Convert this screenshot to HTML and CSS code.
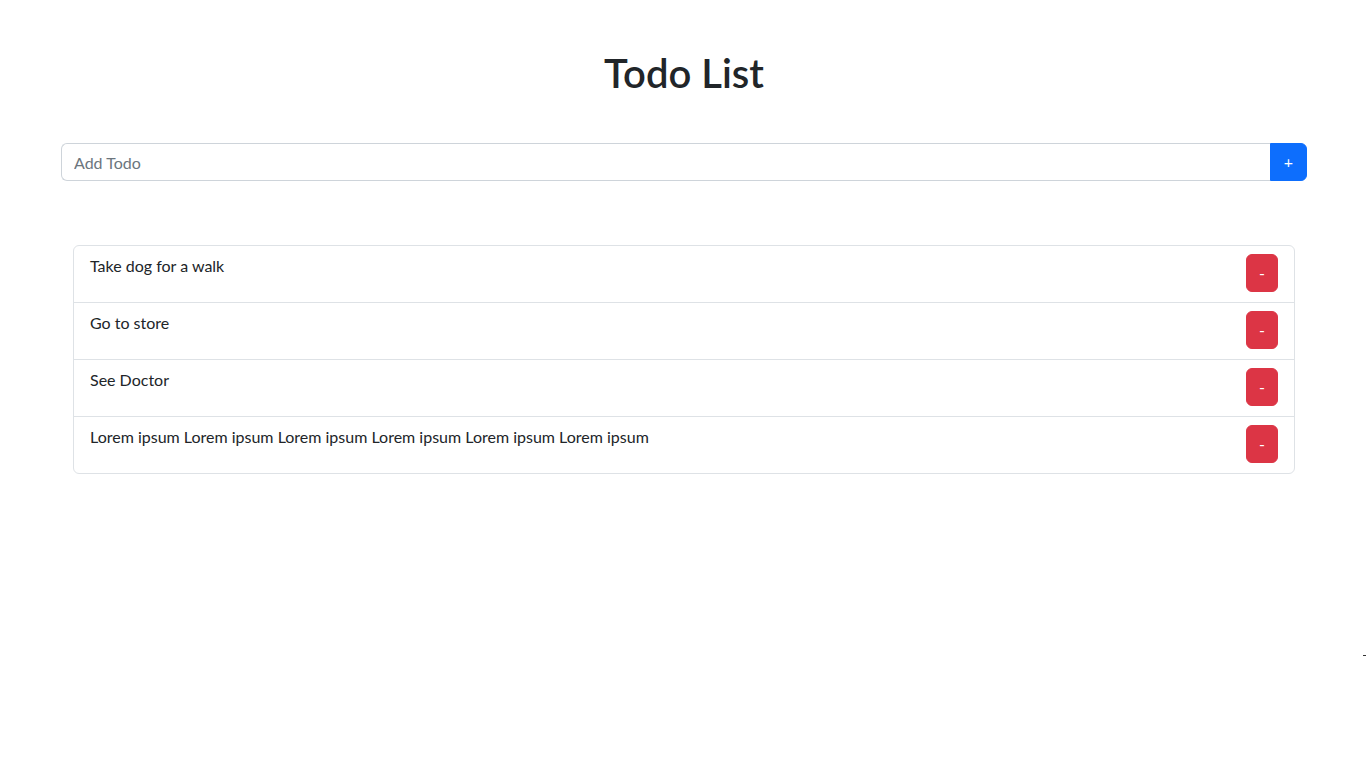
FILE: index.html
```html
<!DOCTYPE html>
<html lang="en">
<head>
<meta charset="utf-8">
<title>Todo List</title>
<link rel="stylesheet" href="styles.css">
</head>
<body>
<main class="page">
  <h1 class="title">Todo List</h1>
  <form class="add-form">
    <input class="add-input" type="text" placeholder="Add Todo">
    <button class="add-btn" type="button">+</button>
  </form>
  <ul class="todo-list">
    <li class="todo-item"><span class="todo-text">Take dog for a walk</span><button class="del-btn" type="button">-</button></li>
    <li class="todo-item"><span class="todo-text">Go to store</span><button class="del-btn" type="button">-</button></li>
    <li class="todo-item"><span class="todo-text">See Doctor</span><button class="del-btn" type="button">-</button></li>
    <li class="todo-item"><span class="todo-text">Lorem ipsum Lorem ipsum Lorem ipsum Lorem ipsum Lorem ipsum Lorem ipsum</span><button class="del-btn" type="button">-</button></li>
  </ul>
</main>
<span class="stray-mark"></span>
</body>
</html>
```
FILE: styles.css
```css
* { box-sizing: border-box; }
html, body { margin: 0; padding: 0; }
body {
  font-family: "Lato", "Liberation Sans", sans-serif;
  font-size: 16px;
  line-height: 1.5;
  color: #212529;
  background: #fff;
  position: relative;
  min-height: 768px;
}
.page {
  padding: 0 59px 0 61px;
}
.title {
  margin: 0;
  padding-top: 49px;
  font-size: 40px;
  font-weight: 600;
  line-height: 1.2;
  text-align: center;
}
.add-form {
  display: flex;
  margin-top: 46px;
  height: 38px;
}
.add-input {
  flex: 1;
  min-width: 0;
  height: 38px;
  padding: 6px 12px;
  font: inherit;
  color: #212529;
  border: 1px solid #ced4da;
  border-right: none;
  border-radius: 6px 0 0 6px;
  outline: none;
}
.add-input::placeholder { color: #6c757d; }
.add-btn {
  width: 37px;
  height: 38px;
  padding: 0;
  font: inherit;
  font-size: 16px;
  color: #fff;
  background: #0d6efd;
  border: 1px solid #0d6efd;
  border-radius: 0 6px 6px 0;
}
.todo-list {
  list-style: none;
  margin: 64px 12px 0 12px;
  padding: 0;
  border: 1px solid #dee2e6;
  border-radius: 6px;
}
.todo-item {
  display: flex;
  justify-content: space-between;
  align-items: flex-start;
  padding: 8px 16px 10px 16px;
  border-top: 1px solid #dee2e6;
}
.todo-item:first-child { border-top: none; }
.del-btn {
  width: 32px;
  height: 38px;
  padding: 0;
  font: inherit;
  color: #fff;
  background: #dc3545;
  border: 1px solid #dc3545;
  border-radius: 6px;
}
.stray-mark {
  position: absolute;
  left: 1363px;
  top: 655px;
  width: 3px;
  height: 1px;
  background: #333;
}
```
